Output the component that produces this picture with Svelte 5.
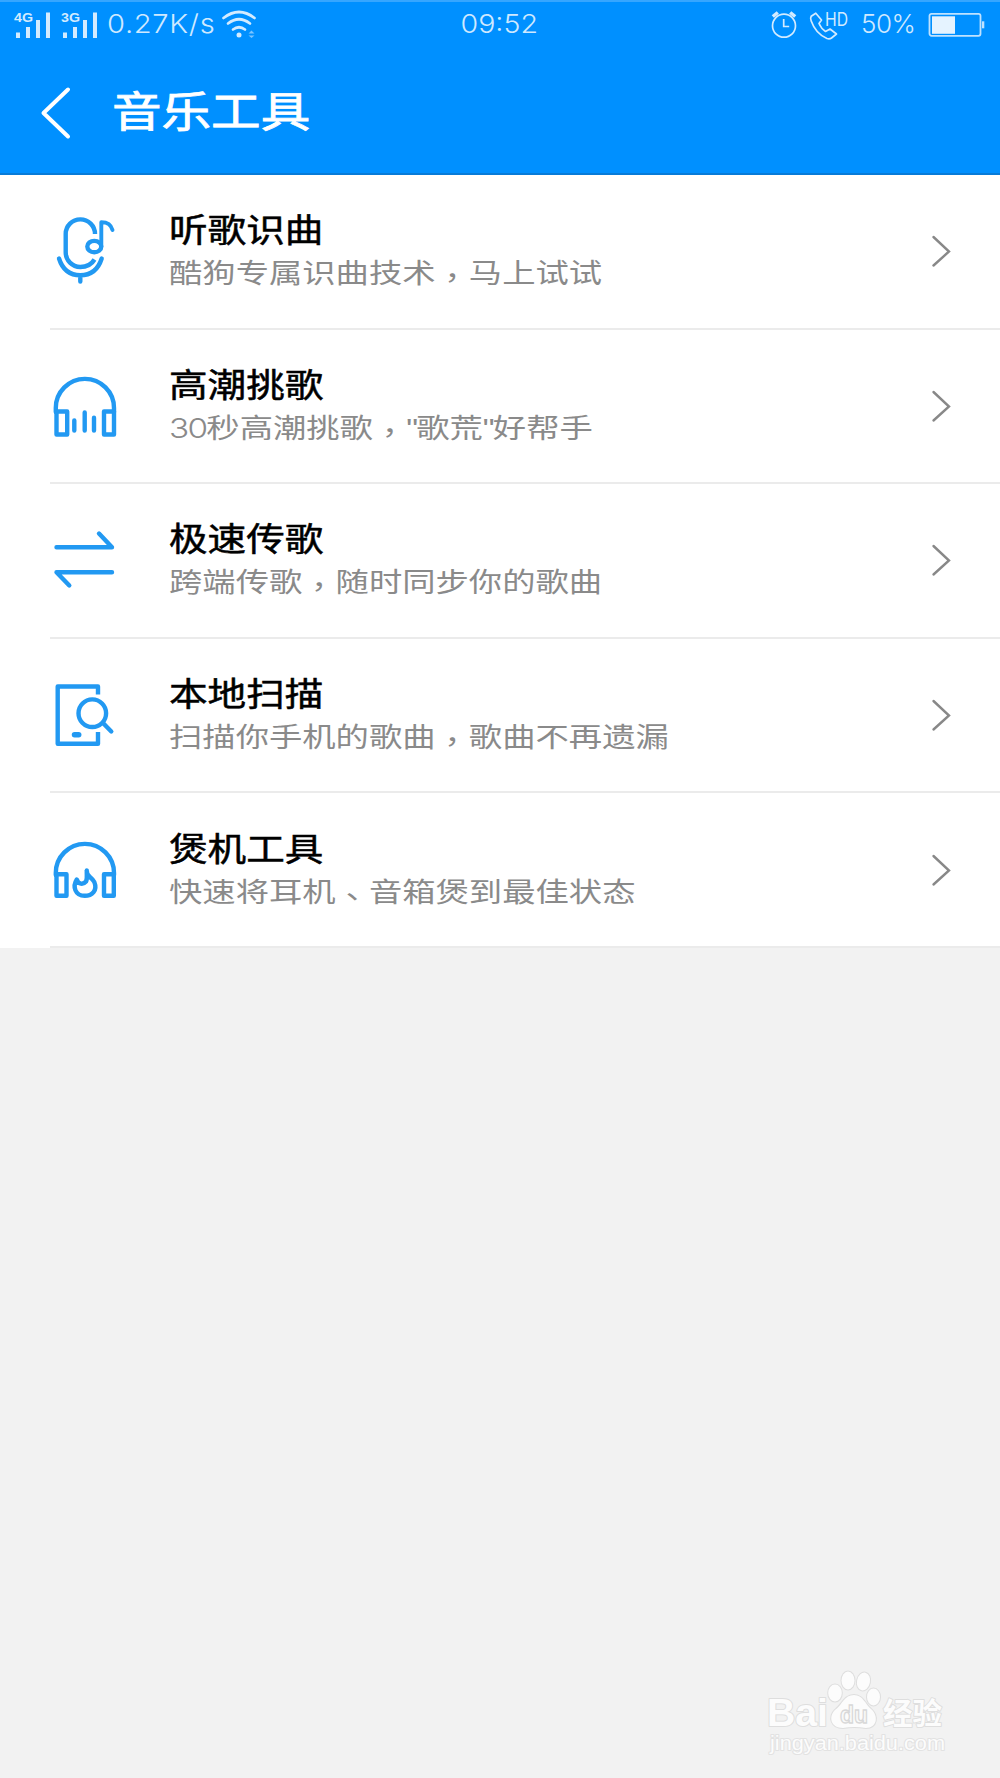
<script>
  const tools = [
    { icon: "mic", title: "听歌识曲", desc: "酷狗专属识曲技术，马上试试" },
    { icon: "chorus", title: "高潮挑歌", desc: '30秒高潮挑歌，"歌荒"好帮手' },
    { icon: "transfer", title: "极速传歌", desc: "跨端传歌，随时同步你的歌曲" },
    { icon: "scan", title: "本地扫描", desc: "扫描你手机的歌曲，歌曲不再遗漏" },
    { icon: "burn", title: "煲机工具", desc: "快速将耳机、音箱煲到最佳状态" },
  ];

  // punctuation and digits are set apart from the hanzi around them
  const split = (desc) => desc.split(/([，、"]|\d+)/).filter(Boolean);

  const kind = (part) => {
    if (part === "，" || part === "、") return "mark";
    if (part === '"') return "quote";
    return /^\d/.test(part) ? "num" : "";
  };
</script>

<svelte:head>
  <title>音乐工具</title>
</svelte:head>

{#snippet signal(label)}
  <svg class="signal" width="38" height="30" viewBox="0 0 38 30">
    <text x="0" y="12" font-size="12.500" font-weight="700" textLength="19" lengthAdjust="spacingAndGlyphs">{label}</text>
    <path d="M2 22.500h4v5.500H2zM12 17h4v11h-4zM22 10h4v18h-4zM32 2.500h4v25.500h-4z" />
  </svg>
{/snippet}

<div class="page">
  <header>
    <div class="status">
      <div class="left">
        {@render signal("4G")}
        {@render signal("3G")}
        <span class="speed">0.27K/s</span>
        <svg class="wifi" width="36" height="30" viewBox="0 0 36 30">
          <g fill="none" stroke="#d3ebff" stroke-width="2.700" stroke-linecap="round">
            <path d="M2.500 8Q18 -4 33.500 8" />
            <path d="M7 13.500Q18 5 29 13.500" />
            <path d="M12 19.500Q18 15 24 19.500" />
          </g>
          <circle cx="18" cy="25" r="2.500" fill="#d3ebff" />
          <path d="M27.500 23.500l3-3 3 3zM27.500 25.500h6l-3 2.500z" fill="#7cc4ff" />
        </svg>
      </div>
      <span class="clock">09:52</span>
      <div class="right">
        <svg class="alarm" width="28" height="30" viewBox="0 0 28 30" fill="none" stroke="#d3ebff" stroke-width="1.700">
          <circle cx="14" cy="15.700" r="11.500" />
          <path d="M13.700 9v7.500h5.500" />
          <path d="M2.800 6.500l5-4M25.200 6.500l-5-4" stroke-width="3.500" />
        </svg>
        <svg class="call" width="42" height="30" viewBox="0 0 42 30" fill="none" stroke="#d3ebff" stroke-width="1.700">
          <path
            d="M6.800 3.200L2.200 6.300Q1 8 2.200 11C5 19 11 25.500 18 28.500q2.500 1 4.500-.5l5-4-6.500-5-4.500 2.500Q12.500 19 10 13.500l2.500-3.500z"
            stroke-linejoin="round" />
          <text x="16" y="15.800" font-size="18" font-weight="400" fill="#d3ebff" stroke="none" textLength="23" lengthAdjust="spacingAndGlyphs">HD</text>
        </svg>
        <span class="percent">50%</span>
        <svg width="57" height="26" viewBox="0 0 57 26">
          <rect x="1.500" y="1.800" width="51" height="22" rx="2" fill="none" stroke="#bfe2ff" stroke-width="1.800" />
          <path d="M4 4.300h23v17.500H4z" fill="#e5f3ff" />
          <path d="M54 9.300h2.300v7H54z" fill="#bfe2ff" />
        </svg>
      </div>
    </div>

    <nav>
      <svg class="back" width="30" height="54" viewBox="0 0 30 54">
        <path d="M28 3.500L3.500 27 28 50.500" fill="none" stroke="#fff" stroke-width="4" stroke-linecap="round" stroke-linejoin="round" />
      </svg>
      <h1>音乐工具</h1>
    </nav>
  </header>

  <ul>
    {#each tools as tool}
      <li>
        <svg class="icon" width="70" height="80" viewBox="0 0 70 80">
          {#if tool.icon === "mic"}
            <path d="M45 22A14.650 14.650 0 0 0 15.700 22V40.300A14.650 14.650 0 0 0 30.300 55Q40 55 44.500 47.500" stroke-linecap="butt" />
            <path d="M9 46.500C12.500 57.500 20 63.300 30.300 63.300S48.200 57.500 51.700 46.500M30.300 63.300V69.500" />
            <ellipse cx="44.300" cy="34.600" rx="7" ry="5.700" />
            <path d="M51.300 34.600V10.200C58 10.200 61 12.500 62.500 18" stroke-width="3.900" />
          {:else if tool.icon === "chorus"}
            <path d="M5.800 45V41A29.100 29.100 0 0 1 64 41V45" />
            <path d="M6.500 44.500H17.200V67.500H6.500zM54 44.500H64V67.500H54zM24.300 53.500V63.500M34.700 45.500V63.500M44 50.800V63.500" />
          {:else if tool.icon === "transfer"}
            <path d="M6.500 26.200H62L49 12.500M62 51.200H6.500L19.300 64.500" />
          {:else if tool.icon === "scan"}
            <path d="M48 18.500V10.500H7.700V67.700H48V56" stroke-linecap="butt" />
            <circle cx="42.300" cy="37.200" r="13.800" />
            <path d="M53 47L61.300 55.500" />
            <path d="M24.500 58.800h4.200" stroke-width="5.500" />
          {:else}
            <path d="M5.800 44V42A29.100 29.100 0 0 1 64 42V44" />
            <path d="M6.500 43.200H16.500V64.800H6.500zM54 43.200H63.800V64.800H54z" />
            <path d="M36.800 39.500C36 45.500 41 45 44.300 51C47.800 59.500 42 64.800 34.700 64.800C25 64.800 22.300 55.500 26.800 48.500C28.500 53.500 33 54 36 50.500C37.500 48 36.500 44 36.800 39.500Z" />
          {/if}
        </svg>
        <div class="body">
          <h2>{tool.title}</h2>
          <p>{#each split(tool.desc) as part}<span class={kind(part)}>{part}</span>{/each}</p>
        </div>
        <svg class="chevron" width="22" height="34" viewBox="0 0 22 34">
          <path d="M2.500 2L18 16.500 2.500 30.500" fill="none" stroke="#888" stroke-width="2.400" stroke-linecap="round" />
        </svg>
      </li>
    {/each}
  </ul>

  <svg class="watermark" width="200" height="100" viewBox="0 0 200 100">
    <g fill="#fcfcfc" stroke="#dedede" stroke-width="2" paint-order="stroke" stroke-linejoin="round">
      <text x="-1" y="57.500" font-size="38" font-weight="700" textLength="61" lengthAdjust="spacingAndGlyphs">Bai</text>
      <ellipse cx="67" cy="25" rx="6.800" ry="8.500" />
      <ellipse cx="80" cy="12.500" rx="6.500" ry="9" />
      <ellipse cx="95.500" cy="13.500" rx="6.500" ry="9" transform="rotate(12 95.500 13.500)" />
      <ellipse cx="105.500" cy="29" rx="6.500" ry="8.500" />
      <path d="M86 27C95 27 97 36 103 41C111 48 109 60 98 60Q86 58 75 60C63 60 60 49 67 42C75 36 76 27 86 27Z" />
      <text x="115" y="56" font-size="30" font-weight="700" textLength="59" lengthAdjust="spacingAndGlyphs">经验</text>
      <text x="2" y="82" font-size="20" stroke="#e2e2e2" textLength="175" lengthAdjust="spacingAndGlyphs">jingyan.baidu.com</text>
    </g>
    <text x="72" y="54.500" font-size="24" fill="#fafafa" stroke="#d8d8d8" stroke-width="1.300" font-weight="700" textLength="28" lengthAdjust="spacingAndGlyphs">du</text>
  </svg>
</div>

<style>
  :global(body) {
    margin: 0;
    background: #f2f2f2;
  }

  .page {
    position: relative;
    width: 1000px;
    height: 1778px;
    overflow: hidden;
    background: #f2f2f2;
    font-family: "Liberation Sans", "Noto Sans CJK SC", sans-serif;
  }

  svg {
    display: block;
    flex: none;
    overflow: visible;
  }

  h1,
  h2,
  p,
  ul {
    margin: 0;
    padding: 0;
    font-weight: 400;
    white-space: nowrap;
  }

  header {
    box-sizing: border-box;
    height: 175px;
    background: #0090ff;
    border-top: 2px solid #36a6ff;
    border-bottom: 2px solid #087bd8;
    color: #cfe9ff;
  }

  .status {
    display: grid;
    grid-template-columns: 1fr auto 1fr;
    align-items: center;
    height: 46px;
    padding: 0 15px 0 14px;
    font-family: Inter, Roboto, sans-serif;
    font-weight: 300;
    font-size: 26px;
  }

  .left,
  .right {
    display: flex;
    align-items: center;
  }

  .right {
    justify-content: flex-end;
  }

  .speed,
  .clock,
  .percent {
    padding-bottom: 3px;
  }

  .signal {
    margin-right: 8.5px;
    fill: #d3ebff;
    font-family: "Liberation Sans", sans-serif;
  }

  .speed {
    width: 108px;
    letter-spacing: 0.6px;
    transform: scaleX(1.12);
    transform-origin: left;
  }

  .wifi {
    margin-left: 6px;
  }

  .clock {
    transform: scaleX(1.1);
  }

  .alarm {
    margin-right: 11px;
  }

  .percent {
    width: 54px;
    margin: 0 13px 0 10px;
    letter-spacing: -0.5px;
  }

  nav {
    display: flex;
    align-items: center;
    height: 129px;
    padding-left: 40px;
  }

  .back {
    margin-right: 42px;
  }

  h1 {
    color: #fff;
    font-size: 42px;
    line-height: 60px;
    -webkit-text-stroke: 0.8px #fff;
    transform: scaleX(1.18);
    transform-origin: left;
  }

  ul {
    list-style: none;
    background: #fff;
  }

  li {
    position: relative;
    display: flex;
    align-items: center;
    height: 154.6px;
    padding: 0 47px 0 50px;
  }

  li::after {
    content: "";
    position: absolute;
    left: 50px;
    right: 0;
    bottom: 0;
    height: 2px;
    background: #ebebeb;
  }

  .icon {
    fill: none;
    stroke: #2299f2;
    stroke-width: 4.4;
    stroke-linecap: round;
    stroke-linejoin: round;
  }

  .body {
    flex: 1;
    margin-left: 49px;
  }

  h2 {
    color: #000;
    font-size: 33px;
    line-height: 44px;
    -webkit-text-stroke: 0.5px #000;
    transform: scaleX(1.17);
    transform-origin: left;
  }

  p {
    color: #8a8a8a;
    font-size: 27px;
    line-height: 42px;
    transform: scaleX(1.234);
    transform-origin: left;
  }

  /* the TC face centres its comma in the em box */
  .mark {
    font-family: "Noto Sans CJK TC", sans-serif;
    line-height: 1;
    vertical-align: -5px;
  }

  .quote {
    letter-spacing: -1.5px;
  }

  .num {
    font-family: Inter, sans-serif;
    font-weight: 300;
    letter-spacing: -1.4px;
  }

  .watermark {
    position: absolute;
    left: 768px;
    top: 1668px;
  }
</style>
